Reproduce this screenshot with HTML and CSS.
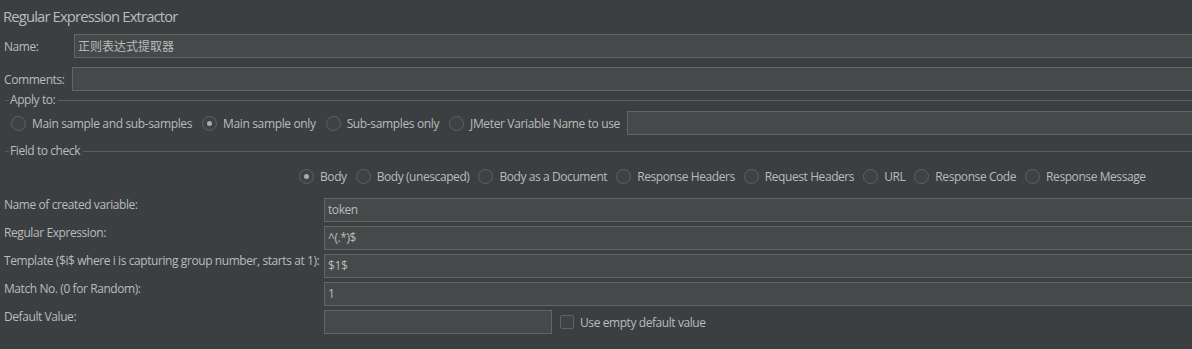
FILE: index.html
```html
<!DOCTYPE html>
<html>
<head>
<meta charset="utf-8">
<link rel="stylesheet" href="styles.css">
</head>
<body>
<div class="panel">
  <div class="title">Regular Expression Extractor</div>

  <div class="row name-row">
    <span class="lbl lbl-name">Name:</span>
    <div class="input grow cjk">正则表达式提取器</div>
  </div>

  <div class="row comments-row">
    <span class="lbl lbl-comments">Comments:</span>
    <div class="input grow"></div>
  </div>

  <div class="group apply-group">
    <div class="legend"><span class="dash"></span><span class="legend-text">Apply to:</span><span class="rule"></span></div>
    <div class="radios apply-radios">
      <span class="radio"><span class="circle"></span>Main sample and sub-samples</span>
      <span class="radio"><span class="circle on"></span>Main sample only</span>
      <span class="radio"><span class="circle"></span>Sub-samples only</span>
      <span class="radio"><span class="circle"></span>JMeter Variable Name to use</span>
      <div class="input grow"></div>
    </div>
  </div>

  <div class="group field-group">
    <div class="legend"><span class="dash"></span><span class="legend-text">Field to check</span><span class="rule"></span></div>
    <div class="radios field-radios">
      <span class="radio"><span class="circle on"></span>Body</span>
      <span class="radio"><span class="circle"></span>Body (unescaped)</span>
      <span class="radio"><span class="circle"></span>Body as a Document</span>
      <span class="radio"><span class="circle"></span>Response Headers</span>
      <span class="radio"><span class="circle"></span>Request Headers</span>
      <span class="radio"><span class="circle"></span>URL</span>
      <span class="radio"><span class="circle"></span>Response Code</span>
      <span class="radio"><span class="circle"></span>Response Message</span>
    </div>
  </div>

  <div class="form-grid">
    <span class="flbl">Name of created variable:</span>
    <div class="input">token</div>
    <span class="flbl">Regular Expression:</span>
    <div class="input">^(.*)$</div>
    <span class="flbl">Template ($i$ where i is capturing group number, starts at 1):</span>
    <div class="input">$1$</div>
    <span class="flbl">Match No. (0 for Random):</span>
    <div class="input">1</div>
    <span class="flbl">Default Value:</span>
    <div class="default-row">
      <div class="input default-input"></div>
      <span class="check"><span class="box"></span>Use empty default value</span>
    </div>
  </div>
</div>
</body>
</html>
```

FILE: styles.css
```css
html, body {
  margin: 0;
  padding: 0;
  background: #3c3f41;
}
body {
  font-family: "Open Sans", "Noto Sans", "Noto Sans CJK SC", sans-serif;
  font-size: 12px;
  letter-spacing: -0.42px;
  color: #bbbbbb;
  overflow: hidden;
  width: 1192px;
  height: 349px;
}
.panel {
  display: flex;
  flex-direction: column;
}
.title {
  height: 34px;
  line-height: 32px;
  font-size: 14.8px;
  letter-spacing: -0.85px;
  padding-left: 3px;
  color: #bbbbbb;
}
.row {
  display: flex;
  align-items: center;
  height: 24px;
}
.lbl {
  padding-left: 4px;
  box-sizing: border-box;
}
.lbl-name { width: 74px; }
.lbl-comments { width: 72px; }
.comments-row { margin-top: 9px; }
.grow { flex: 1; }
.input {
  box-sizing: border-box;
  height: 24px;
  background: #45494a;
  border: 1px solid #646464;
  padding: 0 3px;
  line-height: 22px;
  white-space: nowrap;
  overflow: hidden;
  margin-right: -4px;
}
.cjk {
  font-family: "Noto Sans CJK SC", sans-serif;
  font-size: 12px;
  letter-spacing: 0;
}
.group { display: flex; flex-direction: column; }
.legend {
  display: flex;
  align-items: center;
  height: 14px;
}
.apply-group { margin-top: 2px; }
.dash {
  width: 4px;
  height: 1px;
  background: #5a5d5f;
  margin-left: 5px;
  margin-right: 1px;
}
.legend-text { line-height: 14px; }
.rule {
  flex: 1;
  height: 1px;
  background: #5a5d5f;
  margin-left: 3px;
}
.radios {
  display: flex;
  align-items: center;
  height: 24px;
  white-space: nowrap;
}
.apply-radios {
  margin-top: 4px;
  padding-left: 11px;
  letter-spacing: -0.36px;
}
.apply-radios .radio { margin-right: 10px; }
.field-group { margin-top: 9px; }
.field-radios { margin-top: 6px; padding-left: 299px; }
.radio {
  display: inline-flex;
  align-items: center;
  margin-right: 9px;
}
.circle {
  box-sizing: border-box;
  width: 15px;
  height: 15px;
  border-radius: 50%;
  border: 1px solid #5f6263;
  background: #3e4244;
  margin-right: 6px;
  display: inline-flex;
  align-items: center;
  justify-content: center;
}
.circle.on::after {
  content: "";
  width: 5px;
  height: 5px;
  border-radius: 50%;
  background: #a9abad;
}
.apply-radios .input { margin-left: -3px; }
.form-grid {
  margin-top: 10px;
  display: grid;
  grid-template-columns: 324px 1fr;
  row-gap: 4px;
}
.flbl {
  padding-left: 4px;
  line-height: 14px;
  padding-top: 0px;
  white-space: nowrap;
}
.default-row {
  display: flex;
  align-items: center;
}
.default-input { width: 228px; margin-right: 0; }
.check {
  display: inline-flex;
  align-items: center;
  margin-left: 8px;
}
.box {
  box-sizing: border-box;
  width: 14px;
  height: 14px;
  border: 1px solid #5f6263;
  border-radius: 2px;
  background: #3e4244;
  margin-right: 6px;
}
```
